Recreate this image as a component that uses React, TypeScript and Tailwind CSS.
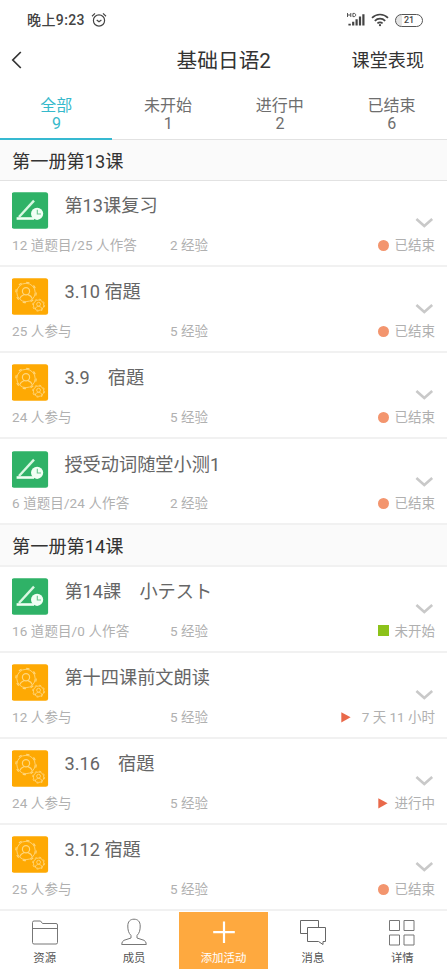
import type { ReactNode } from "react";

type Status = "ended" | "pending" | "running";
type Item = {
  kind: "quiz" | "work";
  title: string;
  people: string;
  exp: string;
  status: Status;
  label: string;
};

const groups: { name: string; items: Item[] }[] = [
  {
    name: "第一册第13课",
    items: [
      { kind: "quiz", title: "第13课复习", people: "12 道题目/25 人作答", exp: "2 经验", status: "ended", label: "已结束" },
      { kind: "work", title: "3.10 宿題", people: "25 人参与", exp: "5 经验", status: "ended", label: "已结束" },
      { kind: "work", title: "3.9　宿題", people: "24 人参与", exp: "5 经验", status: "ended", label: "已结束" },
      { kind: "quiz", title: "授受动词随堂小测1", people: "6 道题目/24 人作答", exp: "2 经验", status: "ended", label: "已结束" },
    ],
  },
  {
    name: "第一册第14课",
    items: [
      { kind: "quiz", title: "第14課　小テスト", people: "16 道题目/0 人作答", exp: "5 经验", status: "pending", label: "未开始" },
      { kind: "work", title: "第十四课前文朗读", people: "12 人参与", exp: "5 经验", status: "running", label: " 7 天 11 小时" },
      { kind: "work", title: "3.16　宿題", people: "24 人参与", exp: "5 经验", status: "running", label: "进行中" },
      { kind: "work", title: "3.12 宿題", people: "25 人参与", exp: "5 经验", status: "ended", label: "已结束" },
    ],
  },
];

const tabs = [
  { name: "全部", count: 9 },
  { name: "未开始", count: 1 },
  { name: "进行中", count: 2 },
  { name: "已结束", count: 6 },
];

function QuizIcon() {
  return (
    <svg className="-ml-[0.4px] block shrink-0" width="37" height="37" viewBox="0 0 37 37" fill="none">
      <rect x="-0.3" y="0.2" width="36.4" height="36.5" rx="2.5" fill="#2fb267" />
      <path d="M4.6 26.5H22" stroke="#effff3" strokeWidth="2.6" />
      <path d="M7 25L22 8.6" stroke="#d9f8e2" strokeWidth="2.4" />
      <circle cx="25.1" cy="21.8" r="6.1" fill="#f1fff4" />
      <path d="M25.3 17.8V22H29" stroke="#6cc68f" strokeWidth="1.1" />
    </svg>
  );
}

function WorkIcon() {
  return (
    <svg className="-ml-[0.4px] block shrink-0" width="37" height="37" viewBox="0 0 37 37" fill="none">
      <rect x="-0.3" y="0.2" width="36.4" height="36.5" rx="2.5" fill="#fea903" />
      <g stroke="#ffd67c" strokeWidth="0.9">
        <circle cx="14" cy="14.5" r="9.2" />
        <circle cx="14" cy="14.5" r="10.2" strokeWidth="1.2" strokeDasharray="3.2 4.8" />
        <circle cx="14" cy="13.2" r="3.6" strokeWidth="1.2" />
        <path d="M7.8 20.6C8.6 18 10.2 17.4 12 16.6M16 16.6C18 17.4 19.5 18 20.2 20.6" strokeWidth="1.2" />
        <circle cx="26.6" cy="27.2" r="5.2" />
        <circle cx="26.6" cy="27.2" r="6" strokeDasharray="2 2.7" />
        <circle cx="26.6" cy="26.2" r="1.9" />
        <path d="M23.3 31C23.8 28.9 24.8 28.7 26.6 28.4C28.4 28.7 29.5 28.9 30 31" />
      </g>
    </svg>
  );
}

function StatusMark({ status }: { status: Status }) {
  if (status === "ended") return <span className="mr-[6px] size-[11px] rounded-full bg-[#f3956e]" />;
  if (status === "pending") return <span className="mr-[6px] size-[11px] bg-[#8cc21a]" />;
  return (
    <svg className="mr-[7px]" width="10" height="11" viewBox="0 0 10 11">
      <path d="M0.3 0.2L9.6 5.3L0.3 10.6Z" fill="#e9694a" />
    </svg>
  );
}

function Row({ item }: { item: Item }) {
  return (
    <div className="flex h-[86.1px] flex-col border-b-2 border-[#f1f1f1] pl-[12px] pr-[12px] pt-[11.3px]">
      <div className="flex h-[37px]">
        {item.kind === "quiz" ? <QuizIcon /> : <WorkIcon />}
        <div className="ml-[15.8px] flex-1 whitespace-pre text-[18.2px] leading-[27px] text-[#666]">{item.title}</div>
        <svg className="mt-[25px] mr-[1px] shrink-0" width="20" height="12" viewBox="0 0 20 12" fill="none">
          <path d="M2.4 2L10.3 9L18.2 2" stroke="#c9c9c9" strokeWidth="2.6" />
        </svg>
      </div>
      <div className="mt-[5.9px] flex h-[20px] items-center text-[13.5px] leading-[20px] text-[#b0b0b0]">
        <span className="w-[158px] whitespace-nowrap tracking-[0.1px]">{item.people}</span>
        <span>{item.exp}</span>
        <span className="ml-auto flex items-center">
          <StatusMark status={item.status} />
          <span className="whitespace-pre">{item.label}</span>
        </span>
      </div>
    </div>
  );
}

function NavItem({ label, active, children }: { label: string; active?: boolean; children: ReactNode }) {
  return (
    <div className={active ? "flex flex-1 flex-col items-center bg-[#fea93f] text-white" : "flex flex-1 flex-col items-center text-[#555]"}>
      <svg className="mt-[5px] block" width="30" height="30" viewBox="0 0 30 30" fill="none" stroke="currentColor" strokeWidth="1">
        {children}
      </svg>
      <span className="mt-[3px] text-[11.4px] leading-[17px]">{label}</span>
    </div>
  );
}

export default function App() {
  return (
    <div className="flex h-[969px] w-[447px] flex-col overflow-hidden bg-white font-[Roboto,'Noto_Sans_CJK_SC',sans-serif]">
      <div className="flex h-[40px] shrink-0 items-center pl-[27px] pr-[24px] text-[#444]">
        <span className="text-[14px] font-medium leading-[20px] tracking-[0.4px]">晚上9:23</span>
        <svg className="ml-[6px]" width="16" height="16" viewBox="0 0 16 16" fill="none" stroke="#444" strokeWidth="1.2">
          <circle cx="8" cy="8.5" r="5.6" />
          <path d="M1 4.2L4 1.4M15 4.2L12 1.4M5.7 8L8 9.8L10.4 8" />
        </svg>
        <svg className="ml-auto" width="19" height="16" viewBox="0 0 19 16" fill="#444">
          <path d="M0.5 1V5M3.8 1V5M0.5 3H3.8M5.9 1.4V4.6H7.1C9.2 4.6 9.2 1.4 7.1 1.4Z" fill="none" stroke="#444" strokeWidth="0.9" />
          <path d="M1.4 11.8H3.8V13.6H1.4ZM5.1 9.8H7.3V13.6H5.1ZM8.5 7.2H10.7V13.6H8.5ZM11.9 4.4H14.1V13.6H11.9ZM15.3 2.2H17.5V13.6H15.3Z" />
        </svg>
        <svg className="ml-[5px]" width="18" height="14" viewBox="0 0 18 14" fill="none" stroke="#444" strokeWidth="1.7">
          <path d="M1 4.8C5.5 0.4 12.5 0.4 17 4.8M3.8 7.8C6.8 4.9 11.2 4.9 14.2 7.8M6.4 10.4C8 9 10 9 11.6 10.4" />
          <circle cx="9" cy="12.2" r="1.1" fill="#444" stroke="none" />
        </svg>
        <span className="ml-[6px] flex h-[13px] w-[28px] items-center justify-center rounded-full border border-[#555] bg-[linear-gradient(to_right,#e4e4e4_6px,#fff_6px)] text-[9px] font-medium leading-none">21</span>
      </div>

      <div className="flex h-[40px] shrink-0 items-center pl-[10px] pr-[23px] text-[#333]">
        <svg className="w-[73px] shrink-0" width="73" height="20" viewBox="0 0 73 20" fill="none">
          <path d="M10.8 2L2.8 10L10.8 18" stroke="#333" strokeWidth="1.7" />
        </svg>
        <span className="flex-1 pl-[13px] pt-px text-center text-[20.7px] leading-[30px]">基础日语2</span>
        <span className="pt-px text-[18.1px] leading-[28px]">课堂表现</span>
      </div>

      <div className="grid h-[60px] shrink-0 grid-cols-4 border-b border-[#e2e2e2]">
        {tabs.map((tab, i) => (
          <div
            key={tab.name}
            className={
              i === 0
                ? "-mb-px flex flex-col items-center border-b-2 border-[#36b9d1] pl-px pt-[16px] text-[#36b9cb]"
                : "flex flex-col items-center pl-px pt-[16px] text-[#6e6e6e]"
            }
          >
            <span className="text-[16px] leading-[19px]">{tab.name}</span>
            <span className="text-[16px] leading-[17px]">{tab.count}</span>
          </div>
        ))}
      </div>

      <div className="h-[772px] shrink-0 overflow-hidden">
        {groups.map((group, i) => (
          <div key={group.name}>
            <div
              className={
                i === 0
                  ? "flex h-[41px] items-center border-b border-[#e2e2e2] bg-[#fafafa] pl-[12px] pt-[2px] text-[18.2px] leading-[27px] text-[#333]"
                  : "flex h-[41.4px] items-center border-b-2 border-[#f1f1f1] bg-[#fafafa] pl-[12px] pt-[3px] text-[18.2px] leading-[27px] text-[#333]"
              }
            >
              {group.name}
            </div>
            {group.items.map((item) => (
              <Row key={item.title} item={item} />
            ))}
          </div>
        ))}
      </div>

      <div className="flex h-[57px] shrink-0 bg-white">
        <NavItem label="资源">
          <path d="M2.5 25.5V5.5Q2.5 4 4 4H10.5L12.5 6.5H26Q27.5 6.5 27.5 8V25.5Q27.5 27 26 27H4Q2.5 27 2.5 25.5ZM2.5 11.5H27.5" stroke="#777" />
        </NavItem>
        <NavItem label="成员">
          <path d="M12 18.5C9.5 16 8.8 13 8.8 9C8.8 4.5 11.2 2.2 15 2.2S21.2 4.5 21.2 9C21.2 13 20.5 16 18 18.5V21L25 23.3Q27.3 24.5 27.3 27.5H2.7Q2.7 24.5 5 23.3L12 21Z" stroke="#777" />
        </NavItem>
        <NavItem label="添加活动" active>
          <path d="M15 4.5V26M4.2 15.2H25.8" strokeWidth="2.2" />
        </NavItem>
        <NavItem label="消息">
          <path d="M9.5 16.5H2.5V3.5H20.5V10.5M9.5 10.5H27.5V24.5H25V27.5L20.5 24.5H9.5Z" stroke="#666" />
        </NavItem>
        <NavItem label="详情">
          <path d="M2.5 3.5H12.5V13.5H2.5ZM17 3.5H27V13.5H17ZM2.5 18H12.5V28H2.5ZM17 18H27V28H17Z" stroke="#777" />
        </NavItem>
      </div>
    </div>
  );
}
